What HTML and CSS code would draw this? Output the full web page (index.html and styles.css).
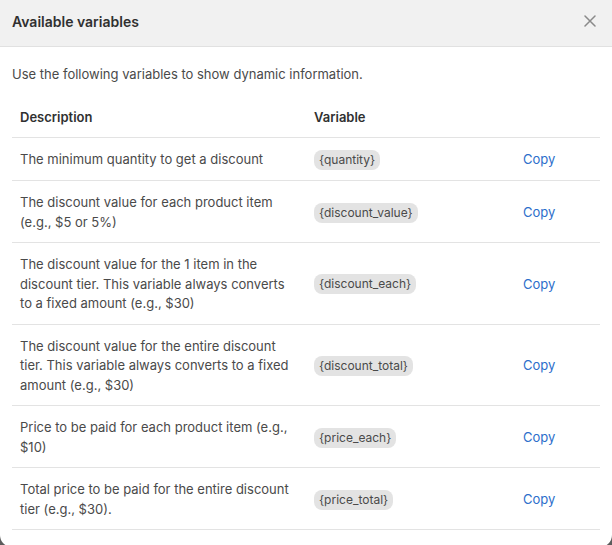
FILE: index.html
```html
<!DOCTYPE html>
<html>
<head>
<meta charset="utf-8">
<link rel="stylesheet" href="styles.css">
</head>
<body>
<div class="modal">
  <div class="modal-header">
    <h2 class="modal-title">Available variables</h2>
    <button class="close-btn" aria-label="Close">
      <svg width="12" height="12" viewBox="0 0 12 12"><path d="M1 1L11 11M11 1L1 11" stroke="#8a8a8a" stroke-width="1.5" stroke-linecap="round"/></svg>
    </button>
  </div>
  <div class="modal-body">
    <p class="intro">Use the following variables to show dynamic information.</p>
    <table class="vars">
      <colgroup><col class="c1"><col class="c2"><col class="c3"></colgroup>
      <thead>
        <tr><th>Description</th><th>Variable</th><th></th></tr>
      </thead>
      <tbody>
        <tr><td>The minimum quantity to get a discount</td><td><span class="pill">{quantity}</span></td><td><a class="copy">Copy</a></td></tr>
        <tr><td>The discount value for each product item (e.g., $5 or 5%)</td><td><span class="pill">{discount_value}</span></td><td><a class="copy">Copy</a></td></tr>
        <tr><td>The discount value for the 1 item in the discount tier. This variable always converts to a fixed amount (e.g., $30)</td><td><span class="pill">{discount_each}</span></td><td><a class="copy">Copy</a></td></tr>
        <tr><td>The discount value for the entire discount tier. This variable always converts to a fixed amount (e.g., $30)</td><td><span class="pill">{discount_total}</span></td><td><a class="copy">Copy</a></td></tr>
        <tr><td>Price to be paid for each product item (e.g., $10)</td><td><span class="pill">{price_each}</span></td><td><a class="copy">Copy</a></td></tr>
        <tr><td>Total price to be paid for the entire discount tier (e.g., $30).</td><td><span class="pill">{price_total}</span></td><td><a class="copy">Copy</a></td></tr>
      </tbody>
    </table>
  </div>
</div>
</body>
</html>
```
FILE: styles.css
```css
html, body {
  margin: 0;
  padding: 0;
  height: 100%;
  overflow: hidden;
}
body {
  background: #5c5c5c;
  font-family: Inter, "Noto Sans", sans-serif;
  color: #4a4a4a;
}
.modal {
  background: #fff;
  height: 547px;
  border-radius: 0 0 12px 12px;
  overflow: hidden;
}
.modal-header {
  height: 46px;
  background: #f1f1f1;
  border-bottom: 1px solid #e1e1e1;
  display: flex;
  align-items: center;
  justify-content: space-between;
  padding: 0 12px;
}
.modal-title {
  margin: 0;
  font-size: 14px;
  font-weight: 600;
  color: #303030;
  position: relative;
  top: -2px;
}
.close-btn {
  border: 0;
  background: transparent;
  padding: 0;
  width: 12px;
  height: 12px;
  display: flex;
  position: relative;
  top: -2px;
  margin-right: 4px;
}
.modal-body {
  padding: 17px 12px 0;
}
.intro {
  margin: 0 0 11.5px;
  font-size: 13px;
  line-height: 20px;
  color: #4a4a4a;
}
.vars {
  width: 588px;
  border-collapse: collapse;
  table-layout: fixed;
  font-size: 13px;
  line-height: 19.5px;
}
.c1 { width: 294px; }
.c2 { width: 209px; }
.c3 { width: 85px; }
.vars th {
  text-align: left;
  font-weight: 600;
  color: #303030;
  padding: 12px 8px 10px;
  border-bottom: 1px solid #e3e3e3;
}
.vars td {
  padding: 12px 8px 10px;
  border-bottom: 1px solid #e3e3e3;
  vertical-align: middle;
  color: #4a4a4a;
}
.pill {
  display: inline-block;
  background: #e3e3e3;
  border-radius: 8px;
  padding: 0 5px;
  font-size: 12px;
  line-height: 20px;
  color: #4a4a4a;
}
.copy {
  color: #2c6ecb;
  cursor: pointer;
  font-size: 13px;
}
```
